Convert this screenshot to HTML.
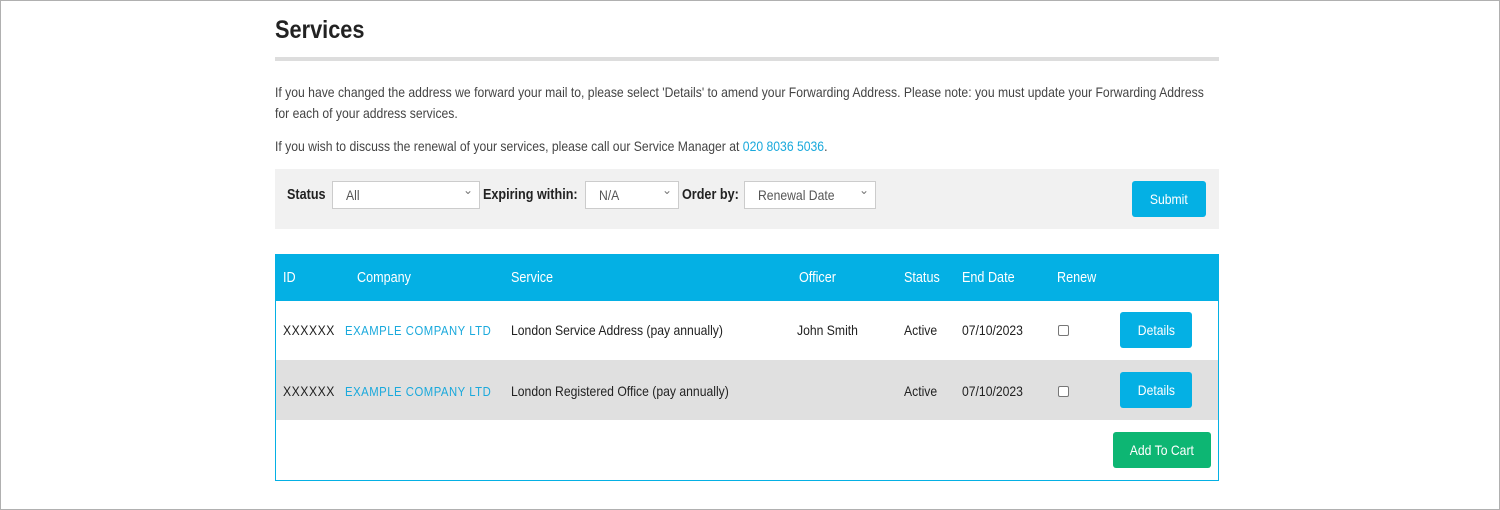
<!DOCTYPE html>
<html><head><meta charset="utf-8"><style>
*{box-sizing:border-box;margin:0;padding:0}
body{width:1500px;height:510px;background:#fff;position:relative;overflow:hidden;font-family:"Liberation Sans",sans-serif;color:#333}
.frame{position:absolute;left:0;top:0;width:1500px;height:510px;border:1px solid #b0b0b0;z-index:9;pointer-events:none}
.a{position:absolute;white-space:nowrap;transform:scaleX(.87);transform-origin:left center}
.s{display:inline-block;white-space:nowrap;transform:scaleX(.87);transform-origin:left center}
h1{position:absolute;left:275px;top:16px;font-size:25px;font-weight:bold;color:#222;transform:scaleX(.87);transform-origin:left center}
.rule{position:absolute;left:275px;top:57px;width:944px;height:4px;background:#ddd}
p{position:absolute;left:275px;font-size:14px;color:#444;line-height:21px;width:1200px}
.filter{position:absolute;left:275px;top:169px;width:944px;height:60px;background:#f1f1f1}
.lbl{font-size:14.5px;font-weight:bold;color:#222;top:187px}
.sel{position:absolute;top:181px;height:28px;background:#fff;border:1px solid #ccc;font-size:14px;color:#555;padding:5px 0 0 13px}
.sel:after{content:"⌄";position:absolute;right:6px;top:1px;font-size:12px;color:#777}
.btn{position:absolute;background:#04b0e4;color:#fff;font-size:14px;text-align:center;border-radius:3px}
.btn span{display:inline-block;transform:scaleX(.87)}
.table{position:absolute;left:275px;top:254px;width:944px;height:227px;border:1px solid #04b0e4}
.head{position:absolute;left:0;top:0;width:942px;height:46px;background:#04b0e4}
.th{color:#fff;font-size:14.5px;top:15px}
.td{font-size:14px;color:#222}
.co{color:#1aa9dc;letter-spacing:.6px;font-size:13px}
.cb{position:absolute;width:11px;height:11px;border:1px solid #777;border-radius:2px;background:#fff}
</style></head><body>
<div class="frame"></div>
<h1>Services</h1>
<div class="rule"></div>
<p style="top:82px"><span class="s">If you have changed the address we forward your mail to, please select 'Details' to amend your Forwarding Address. Please note: you must update your Forwarding Address</span><br><span class="s">for each of your address services.</span></p>
<p style="top:136px"><span class="s">If you wish to discuss the renewal of your services, please call our Service Manager at <span style="color:#1aa9dc">020 8036 5036</span>.</span></p>
<div class="filter"></div>
<div class="a lbl" style="left:287px">Status</div>
<div class="sel" style="left:332px;width:148px"><span class="s">All</span></div>
<div class="a lbl" style="left:483px">Expiring within:</div>
<div class="sel" style="left:585px;width:94px"><span class="s">N/A</span></div>
<div class="a lbl" style="left:682px">Order by:</div>
<div class="sel" style="left:744px;width:132px"><span class="s">Renewal Date</span></div>
<div class="btn" style="left:1132px;top:181px;width:74px;height:36px;line-height:37px"><span>Submit</span></div>
<div class="table">
<div class="head"></div>
<div class="a th" style="left:7px">ID</div>
<div class="a th" style="left:81px">Company</div>
<div class="a th" style="left:235px">Service</div>
<div class="a th" style="left:523px">Officer</div>
<div class="a th" style="left:628px">Status</div>
<div class="a th" style="left:686px">End Date</div>
<div class="a th" style="left:781px">Renew</div>
<div style="position:absolute;left:0;top:105px;width:942px;height:60px;background:#e0e0e0"></div>
</div>
<div class="a td" style="left:283px;top:322px;letter-spacing:.6px">XXXXXX</div>
<div class="a td co" style="left:345px;top:323px">EXAMPLE COMPANY LTD</div>
<div class="a td" style="left:511px;top:322px">London Service Address (pay annually)</div>
<div class="a td" style="left:797px;top:322px">John Smith</div>
<div class="a td" style="left:904px;top:322px">Active</div>
<div class="a td" style="left:962px;top:322px">07/10/2023</div>
<div class="cb" style="left:1058px;top:325px"></div>
<div class="btn" style="left:1120px;top:312px;width:72px;height:36px;line-height:37px"><span>Details</span></div>
<div class="a td" style="left:283px;top:383px;letter-spacing:.6px">XXXXXX</div>
<div class="a td co" style="left:345px;top:384px">EXAMPLE COMPANY LTD</div>
<div class="a td" style="left:511px;top:383px">London Registered Office (pay annually)</div>
<div class="a td" style="left:904px;top:383px">Active</div>
<div class="a td" style="left:962px;top:383px">07/10/2023</div>
<div class="cb" style="left:1058px;top:386px"></div>
<div class="btn" style="left:1120px;top:372px;width:72px;height:36px;line-height:37px"><span>Details</span></div>
<div class="btn" style="left:1113px;top:432px;width:98px;height:36px;line-height:37px;background:#0db673"><span>Add To Cart</span></div>
</body></html>
